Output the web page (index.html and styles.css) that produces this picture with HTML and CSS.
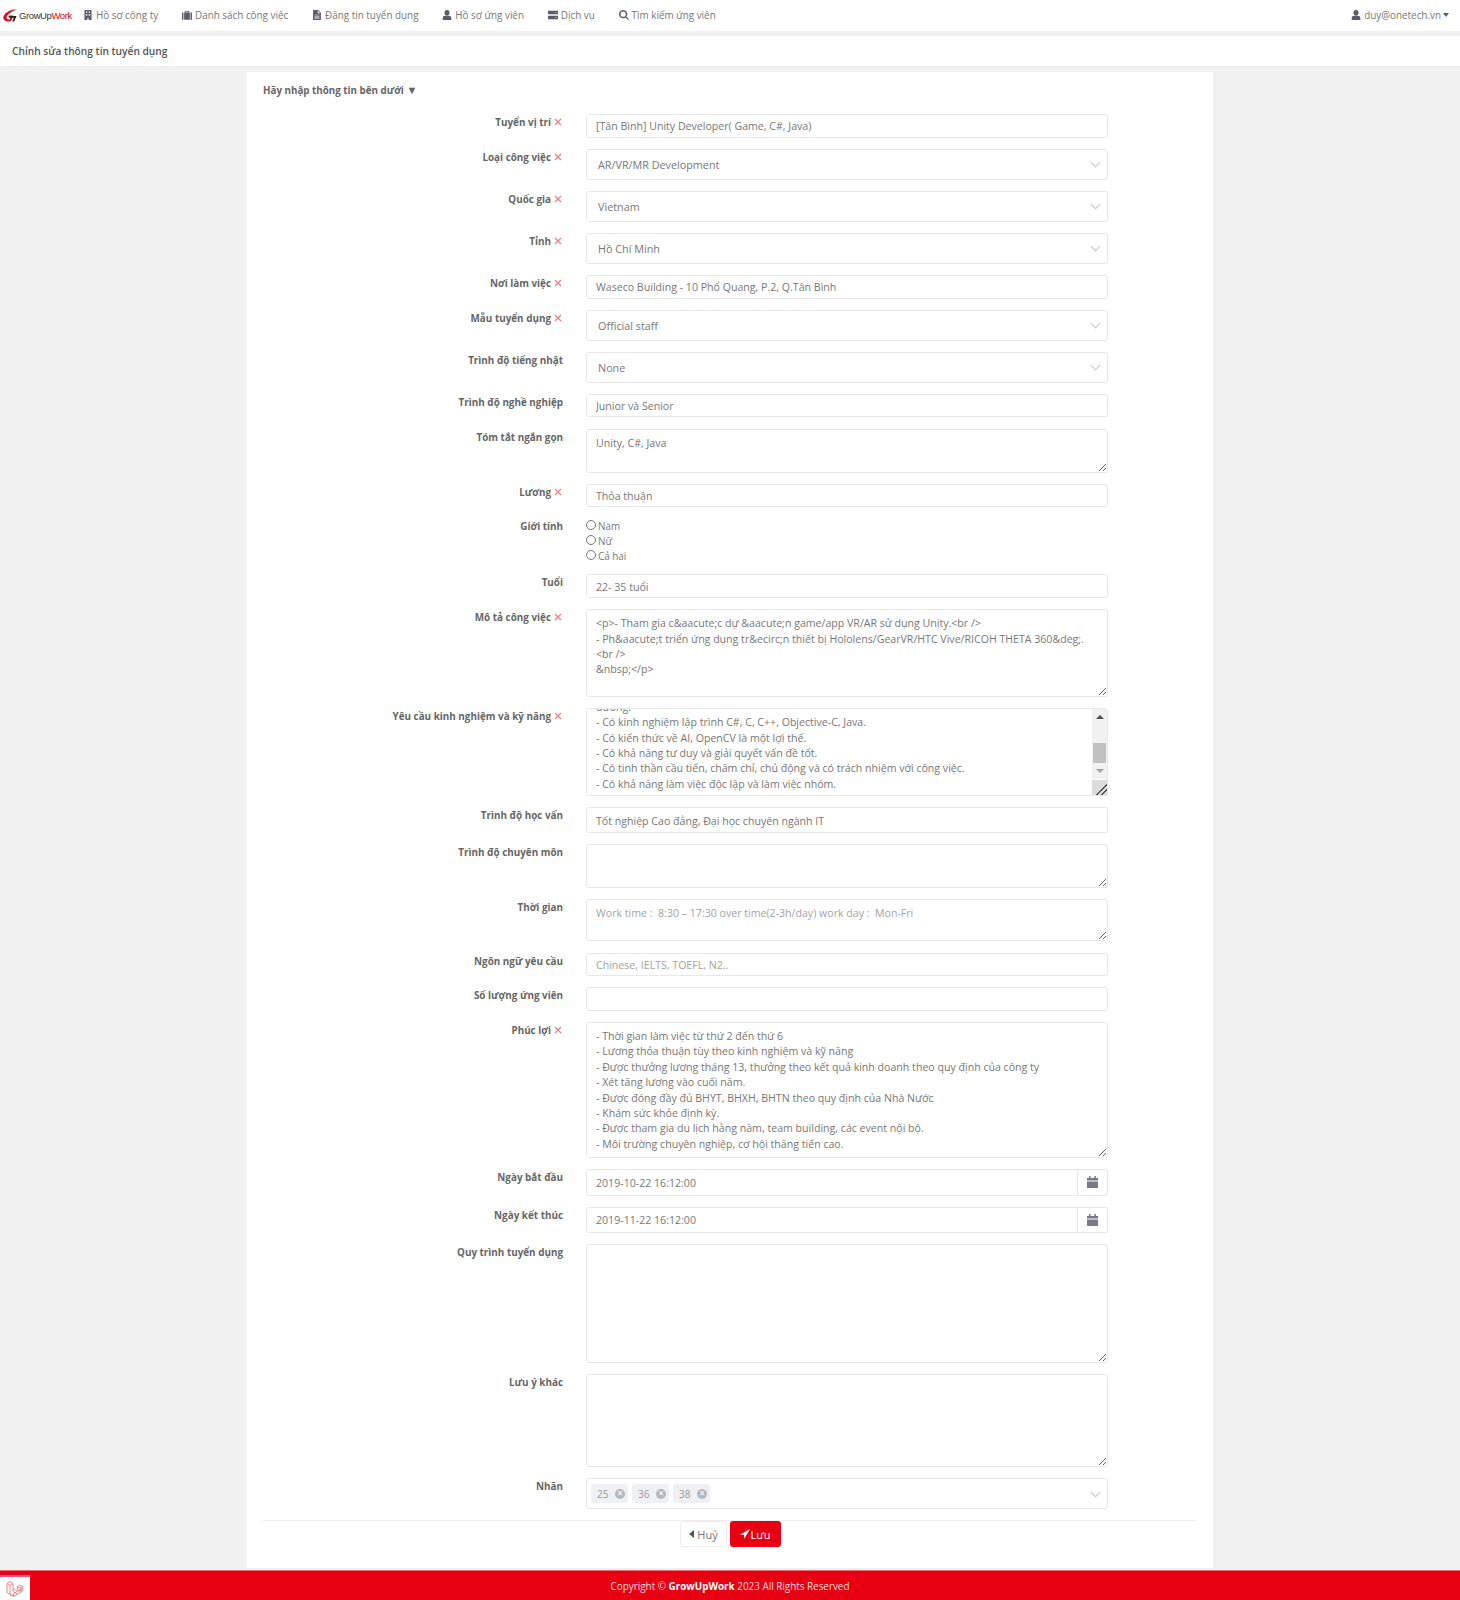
FILE: index.html
```html
<!DOCTYPE html>
<html lang="vi">
<head>
    <meta charset="UTF-8">
    <title>Chỉnh sửa thông tin tuyển dụng</title>
    <link rel="stylesheet" href="styles.css">
</head>
<body>
    <svg class="sprite" aria-hidden="true">
        <symbol id="i-building" viewBox="0 0 12 14"><path d="M1 0h10v14H7v-2.500H5V14H1zM3 2v2h2V2zm4 0v2h2V2zM3 6v2h2V6zm4 0v2h2V6z" fill-rule="evenodd"/></symbol>
        <symbol id="i-suitcase" viewBox="0 0 14 13"><path d="M0 3h2v10H0zM12 3h2v10h-2zM3 3h1V1h6v2h1v10H3zM5 2v1h4V2z" fill-rule="evenodd"/></symbol>
        <symbol id="i-file" viewBox="0 0 11 14"><path d="M0 0h7l4 4v10H0zM6.500 1v3.500H10zM2 6.500v1h7v-1zM2 9v1h7V9zM2 11v1h7v-1z" fill-rule="evenodd"/></symbol>
        <symbol id="i-user" viewBox="0 0 12 14"><path d="M6 0a3.500 3.800 0 0 1 0 7.600A3.500 3.800 0 0 1 6 0zM0 14v-3c0-1.800 1.500-3 3.500-3h5c2 0 3.500 1.200 3.500 3v3z"/></symbol>
        <symbol id="i-server" viewBox="0 0 14 12"><path d="M0 0h14v5H0zM0 7h14v5H0zM10 2v1h2V2zM10 9v1h2V9z" fill-rule="evenodd"/></symbol>
        <symbol id="i-search" viewBox="0 0 13 13"><path d="M5.400 0a5.400 5.400 0 0 1 4.300 8.600L13 11.900 11.900 13 8.600 9.700A5.400 5.400 0 1 1 5.400 0zm0 2a3.400 3.400 0 1 0 0 6.800 3.400 3.400 0 0 0 0-6.800z" fill-rule="evenodd"/></symbol>
        <symbol id="i-calendar" viewBox="0 0 11 12"><path d="M0 2h2V0h1.500v2h4V0H9v2h2v2.500H0zM0 5.500h11V12H0z"/></symbol>
        <symbol id="i-x" viewBox="0 0 8 8"><path d="M1 1l6 6M7 1L1 7" fill="none" stroke="currentColor" stroke-width="1.200"/></symbol>
    </svg>

    <nav class="topbar">
        <a class="logo" href="#">
            <svg class="logo-mark" viewBox="0 0 16 14">
                <path d="M15 0.500C9 0 2.500 3 0.500 8c-1 3 1.500 5.500 5 5.500 1.500 0 2.500-.4 3.500-1L11 7H6.500L5.500 9h2.300l-.8 2.200C4.500 12 3 10 4 8c1.500-3 6-6 11-7.500z" fill="#d8101c"/>
                <path d="M7 7.500h7.500L12 13.500h-2l1.500-4.200H6.500z" fill="#222"/>
            </svg>
            <span class="logo-text">GrowUp<b>Work</b></span>
        </a>
        <a class="nav-item" href="#"><svg class="nav-icon"><use href="#i-building"/></svg>Hồ sơ công ty</a>
        <a class="nav-item" href="#"><svg class="nav-icon"><use href="#i-suitcase"/></svg>Danh sách công việc</a>
        <a class="nav-item" href="#"><svg class="nav-icon"><use href="#i-file"/></svg>Đăng tin tuyển dụng</a>
        <a class="nav-item" href="#"><svg class="nav-icon"><use href="#i-user"/></svg>Hồ sơ ứng viên</a>
        <a class="nav-item" href="#"><svg class="nav-icon"><use href="#i-server"/></svg>Dịch vụ</a>
        <a class="nav-item" href="#"><svg class="nav-icon"><use href="#i-search"/></svg>Tìm kiếm ứng viên</a>
        <a class="nav-user" href="#"><svg class="nav-icon"><use href="#i-user"/></svg>duy@onetech.vn<span class="caret"></span></a>
    </nav>

    <div class="page-title">Chỉnh sửa thông tin tuyển dụng</div>

    <main class="card">
        <h2 class="card-title">Hãy nhập thông tin bên dưới <span class="card-arrow">▼</span></h2>

        <form>
            <div class="row">
                <label class="row-label">Tuyển vị trí<svg class="req"><use href="#i-x"/></svg></label>
                <input class="control" type="text" value="[Tân Bình] Unity Developer( Game, C#, Java)">
            </div>
            <div class="row">
                <label class="row-label">Loại công việc<svg class="req"><use href="#i-x"/></svg></label>
                <div class="select">AR/VR/MR Development</div>
            </div>
            <div class="row">
                <label class="row-label">Quốc gia<svg class="req"><use href="#i-x"/></svg></label>
                <div class="select">Vietnam</div>
            </div>
            <div class="row">
                <label class="row-label">Tỉnh<svg class="req"><use href="#i-x"/></svg></label>
                <div class="select">Hồ Chí Minh</div>
            </div>
            <div class="row">
                <label class="row-label">Nơi làm việc<svg class="req"><use href="#i-x"/></svg></label>
                <input class="control" type="text" value="Waseco Building - 10 Phổ Quang, P.2, Q.Tân Bình">
            </div>
            <div class="row">
                <label class="row-label">Mẫu tuyển dụng<svg class="req"><use href="#i-x"/></svg></label>
                <div class="select">Official staff</div>
            </div>
            <div class="row">
                <label class="row-label">Trình độ tiếng nhật</label>
                <div class="select">None</div>
            </div>
            <div class="row">
                <label class="row-label">Trình độ nghề nghiệp</label>
                <input class="control" type="text" value="Junior và Senior">
            </div>
            <div class="row">
                <label class="row-label">Tóm tắt ngắn gọn</label>
                <textarea class="control area h-44">Unity, C#, Java</textarea>
            </div>
            <div class="row">
                <label class="row-label">Lương<svg class="req"><use href="#i-x"/></svg></label>
                <input class="control" type="text" value="Thỏa thuận">
            </div>
            <div class="row">
                <label class="row-label">Giới tính</label>
                <div class="radios">
                    <label class="radio"><input type="radio" name="gender">Nam</label>
                    <label class="radio"><input type="radio" name="gender">Nữ</label>
                    <label class="radio"><input type="radio" name="gender">Cả hai</label>
                </div>
            </div>
            <div class="row">
                <label class="row-label">Tuổi</label>
                <input class="control" type="text" value="22- 35 tuổi">
            </div>
            <div class="row">
                <label class="row-label">Mô tả công việc<svg class="req"><use href="#i-x"/></svg></label>
                <textarea class="control area h-88">&lt;p&gt;- Tham gia c&amp;aacute;c dự &amp;aacute;n game/app VR/AR sử dụng Unity.&lt;br /&gt;
- Ph&amp;aacute;t triển ứng dụng tr&amp;ecirc;n thiết bị Hololens/GearVR/HTC Vive/RICOH THETA 360&amp;deg;.
&lt;br /&gt;
&amp;nbsp;&lt;/p&gt;</textarea>
            </div>
            <div class="row">
                <label class="row-label">Yêu cầu kinh nghiệm và kỹ năng<svg class="req"><use href="#i-x"/></svg></label>
                <div class="skills-box">
                    <textarea class="control area h-88 scrolled" id="skills">- Tốt nghiệp Cao đẳng, Đại học chuyên ngành IT.
- Có ít nhất 1 năm kinh nghiệm phát triển với Unity.
- Nắm vững kiến thức về lập trình hướng đối tượng.
- Hiểu biết về thiết kế, tối ưu hiệu năng và bảo trì, bảo
dưỡng.
- Có kinh nghiệm lập trình C#, C, C++, Objective-C, Java.
- Có kiến thức về AI, OpenCV là một lợi thế.
- Có khả năng tư duy và giải quyết vấn đề tốt.
- Có tinh thần cầu tiến, chăm chỉ, chủ động và có trách nhiệm với công việc.
- Có khả năng làm việc độc lập và làm việc nhóm.</textarea>
                    <div class="scroll-bar">
                        <span class="scroll-up"></span>
                        <span class="scroll-track"><span class="scroll-thumb"></span></span>
                        <span class="scroll-down"></span>
                    </div>
                </div>
            </div>
            <div class="row">
                <label class="row-label">Trình độ học vấn</label>
                <input class="control tall" type="text" value="Tốt nghiệp Cao đẳng, Đại học chuyên ngành IT">
            </div>
            <div class="row">
                <label class="row-label">Trình độ chuyên môn</label>
                <textarea class="control area h-44"></textarea>
            </div>
            <div class="row">
                <label class="row-label">Thời gian</label>
                <textarea class="control area h-42" placeholder="Work time :  8:30 – 17:30 over time(2-3h/day) work day :  Mon-Fri"></textarea>
            </div>
            <div class="row">
                <label class="row-label">Ngôn ngữ yêu cầu</label>
                <input class="control" type="text" placeholder="Chinese, IELTS, TOEFL, N2..">
            </div>
            <div class="row">
                <label class="row-label">Số lượng ứng viên</label>
                <input class="control" type="text">
            </div>
            <div class="row">
                <label class="row-label">Phúc lợi<svg class="req"><use href="#i-x"/></svg></label>
                <textarea class="control area h-136">- Thời gian làm việc từ thứ 2 đến thứ 6
- Lương thỏa thuận tùy theo kinh nghiệm và kỹ năng
- Được thưởng lương tháng 13, thưởng theo kết quả kinh doanh theo quy định của công ty
- Xét tăng lương vào cuối năm.
- Được đóng đầy đủ BHYT, BHXH, BHTN theo quy định của Nhà Nước
- Khám sức khỏe định kỳ.
- Được tham gia du lịch hằng năm, team building, các event nội bộ.
- Môi trường chuyên nghiệp, cơ hội thăng tiến cao.</textarea>
            </div>
            <div class="row">
                <label class="row-label">Ngày bắt đầu</label>
                <div class="date-group">
                    <input class="date-input" type="text" value="2019-10-22 16:12:00">
                    <span class="date-addon"><svg class="cal"><use href="#i-calendar"/></svg></span>
                </div>
            </div>
            <div class="row">
                <label class="row-label">Ngày kết thúc</label>
                <div class="date-group">
                    <input class="date-input" type="text" value="2019-11-22 16:12:00">
                    <span class="date-addon"><svg class="cal"><use href="#i-calendar"/></svg></span>
                </div>
            </div>
            <div class="row">
                <label class="row-label">Quy trình tuyển dụng</label>
                <textarea class="control area h-119"></textarea>
            </div>
            <div class="row">
                <label class="row-label">Lưu ý khác</label>
                <textarea class="control area h-93"></textarea>
            </div>
            <div class="row row-last">
                <label class="row-label">Nhãn</label>
                <div class="select tags">
                    <span class="tag">25<span class="tag-close">×</span></span>
                    <span class="tag">36<span class="tag-close">×</span></span>
                    <span class="tag">38<span class="tag-close">×</span></span>
                </div>
            </div>

            <div class="actions">
                <button class="btn btn-cancel" type="button"><span class="back-arrow"></span>Huỷ</button>
                <button class="btn btn-save" type="button">
                    <svg class="send" viewBox="0 0 12 12"><path d="M12 0L0 7h5v5z" fill="#fff"/></svg>Lưu
                </button>
            </div>
        </form>
    </main>

    <footer class="footer">Copyright © <b>GrowUpWork</b> 2023 All Rights Reserved</footer>

    <div class="debug-tab">
        <svg viewBox="0 0 18 18" width="18" height="18">
            <path d="M1 3.500l3-2 3 2v8l4.500 2.500M1 3.500v9l6.500 4 8.500-5V9M1 3.500l3 2 3-2M4 5.500v8.500l3.500 2M7.500 16.500v-3L16 8.500M7 8.500l4 2.500M11.500 6.500l2.500-1.500 3 1.700v3l-3 1.700-2.500-1.500zM11.500 6.500l2.500 1.600 3-1.400M14 8.100V11" fill="none" stroke="#ee7b80" stroke-width=".9"/>
        </svg>
    </div>

    <script>
        // the skills box was left scrolled to the end
        const skills = document.getElementById('skills');
        skills.scrollTop = skills.scrollHeight;
    </script>
</body>
</html>
```

FILE: styles.css
```css
* {
    box-sizing: border-box;
}
body {
    margin: 0;
    background-color: #f1f1f1;
    font-family: "Open Sans", sans-serif;
    font-size: 9.9px;
    color: #777;
    position: relative;
}
a {
    color: inherit;
    text-decoration: none;
}
.sprite {
    display: none;
}

/* top bar */
.topbar {
    display: flex;
    align-items: center;
    height: 31px;
    background-color: #fff;
    padding: 0 11px 1px 3px;
}
.logo {
    display: flex;
    align-items: center;
    width: 80px;
    color: #333;
}
.logo-mark {
    width: 15px;
    height: 13px;
    margin-right: 1px;
}
.logo-text {
    font-family: "Liberation Sans", sans-serif;
    font-size: 9.5px;
    letter-spacing: -0.4px;
}
.logo-text b {
    font-weight: 400;
    color: #e60012;
}
.nav-item {
    display: flex;
    align-items: center;
    margin-right: 23.8px;
    white-space: nowrap;
}
.nav-icon {
    width: 10px;
    height: 10px;
    margin-right: 3px;
    fill: #5a5c69;
}
.nav-user {
    display: flex;
    align-items: center;
    margin-left: auto;
}
.caret {
    margin-left: 2px;
    border-top: 4px solid #5a5c69;
    border-left: 3px solid transparent;
    border-right: 3px solid transparent;
}

.page-title {
    height: 30px;
    margin-top: 5px;
    padding-left: 12px;
    background-color: #fff;
    font-size: 10.2px;
    line-height: 30px;
    font-weight: 600;
    color: #555;
}

/* form card */
.card {
    width: 966px;
    height: 1496px;
    margin: 6px 0 2px 247px;
    padding: 0 16px;
    background-color: #fff;
}
.card-title {
    height: 42px;
    margin: 0;
    padding-top: 11px;
    font-size: 9.8px;
    line-height: 16px;
    font-weight: 700;
    color: #666;
}
.card-arrow {
    font-size: 11px;
    line-height: 1;
}
.row {
    display: grid;
    grid-template-columns: 323px 522px;
    margin-bottom: 11.1px;
}
.row-last {
    margin-bottom: 11px;
}
.row-label {
    display: flex;
    justify-content: flex-end;
    align-items: center;
    align-self: start;
    padding-right: 23px;
    font-weight: 700;
    line-height: 16px;
    color: #666;
}
.req {
    width: 8px;
    height: 8px;
    margin-left: 3px;
    margin-right: 1px;
    color: #f27a82;
}
.control,
.select,
.date-group {
    width: 522px;
    border: 1px solid #e8e8ec;
    border-radius: 3px;
    background-color: #fff;
    font-family: inherit;
    font-size: 10.6px;
    color: #777;
}
.control {
    display: block;
    height: 23.6px;
    padding: 1px 9px 0;
    outline: none;
}
.control.tall {
    height: 26px;
}
.control::placeholder {
    color: #a3a3a3;
    opacity: 1;
}
.area {
    padding: 6px 9px 5px;
    line-height: 15.4px;
}
.h-42 { height: 42px; }
.h-44 { height: 44px; }
.h-88 { height: 88px; }
.h-93 { height: 93px; }
.h-119 { height: 119px; }
.h-136 { height: 136px; }

/* skills box: text scrolled to the end, scrollbar drawn over it */
.skills-box {
    position: relative;
}
.area.scrolled {
    padding-bottom: 3px;
}
.scrolled::-webkit-resizer {
    background-color: #dcdcdc;
    background-image: linear-gradient(135deg, transparent 62%, #555 62%, #555 68%, transparent 68%, transparent 80%, #555 80%, #555 86%, transparent 86%);
}
.scroll-bar {
    position: absolute;
    top: 1px;
    right: 1px;
    bottom: 17px;
    width: 15px;
    display: flex;
    flex-direction: column;
    align-items: center;
    background-color: #f1f1f1;
}
.scroll-up,
.scroll-down {
    flex: none;
    width: 0;
    margin: 6px 0 5px;
    border-left: 4px solid transparent;
    border-right: 4px solid transparent;
}
.scroll-up {
    border-bottom: 4px solid #505050;
}
.scroll-down {
    margin: 5px 0 6px;
    border-top: 4px solid #a3a3a3;
}
.scroll-track {
    flex: 1;
    width: 13px;
}
.scroll-thumb {
    display: block;
    height: 20px;
    margin-top: 19px;
    background-color: #c1c1c1;
}

.select {
    position: relative;
    height: 31px;
    padding-left: 11px;
    font-size: 10.8px;
    line-height: 30px;
}
.select::after {
    content: "";
    position: absolute;
    top: 9.500px;
    right: 8.500px;
    width: 6px;
    height: 6px;
    border-right: 1px solid #c4c7d0;
    border-bottom: 1px solid #c4c7d0;
    transform: rotate(45deg);
}

/* radios */
.radios {
    display: flex;
    flex-direction: column;
}
.radio {
    display: flex;
    align-items: center;
    height: 15px;
}
.radio input {
    width: 10px;
    height: 10px;
    margin: 0 2px 2px 0;
}

/* date pickers */
.date-group {
    display: flex;
    height: 26.5px;
}
.date-input {
    flex: 1;
    min-width: 0;
    border: 0;
    padding: 1px 9px 0;
    outline: none;
    background: transparent;
    font-family: inherit;
    font-size: 10.6px;
    color: #777;
}
.date-addon {
    display: flex;
    align-items: center;
    justify-content: center;
    width: 30px;
    border-left: 1px solid #e8e8ec;
}
.cal {
    width: 11px;
    height: 12px;
    fill: #777a85;
}

/* tags */
.tags {
    display: flex;
    align-items: center;
    gap: 4px;
    padding-left: 4px;
    font-size: 10px;
    line-height: 1;
}
.tag {
    display: flex;
    align-items: center;
    justify-content: space-between;
    width: 37px;
    height: 19px;
    padding: 0 3px 0 6px;
    border-radius: 3px;
    background-color: #eff0f4;
    color: #999;
}
.tag-close {
    width: 10px;
    height: 10px;
    border-radius: 50%;
    background-color: #b4b7bf;
    color: #fff;
    font-size: 10px;
    line-height: 9px;
    text-align: center;
}

/* buttons */
.actions {
    display: flex;
    justify-content: center;
    gap: 3px;
    border-top: 1px solid #eee;
}
.btn {
    display: flex;
    align-items: center;
    justify-content: center;
    height: 26px;
    border-radius: 3px;
    font-family: inherit;
    font-size: 11px;
}
.btn-cancel {
    width: 47px;
    border: 1px solid #eee;
    background-color: #fff;
    color: #777;
}
.btn-save {
    width: 51px;
    border: 0;
    background-color: #e60012;
    color: #fff;
}
.back-arrow {
    margin-right: 3px;
    margin-left: 1px;
    border-right: 5px solid #555;
    border-top: 4px solid transparent;
    border-bottom: 4px solid transparent;
}
.send {
    width: 10px;
    height: 10px;
    margin-right: 1px;
}

.footer {
    height: 30px;
    border-top: 1px solid #f06a72;
    background-color: #e60012;
    color: #fdd;
    line-height: 30px;
    text-align: center;
}
.footer b {
    color: #fff;
}

/* little tab over the footer corner */
.debug-tab {
    position: absolute;
    left: 0;
    bottom: 0;
    width: 30px;
    height: 25px;
    display: flex;
    align-items: center;
    justify-content: center;
    border-top: 2px solid #f58;
    background-color: #fff;
}
```
